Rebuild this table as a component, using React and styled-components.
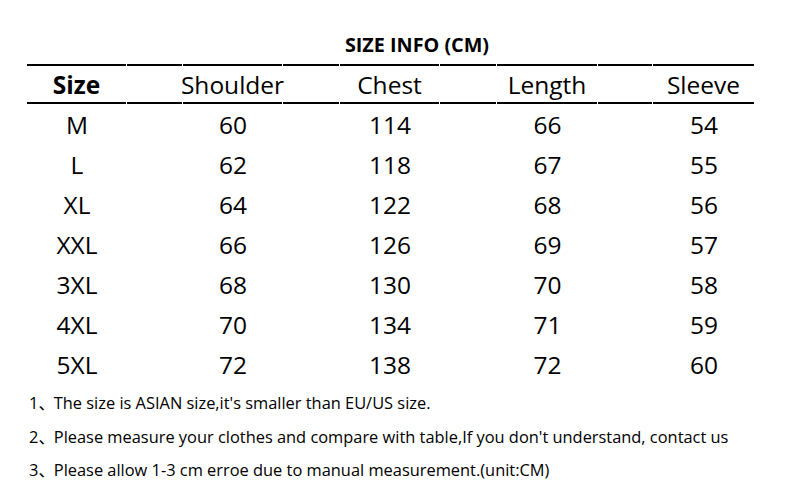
import React from "react";
import styled, { createGlobalStyle } from "styled-components";

const GlobalStyle = createGlobalStyle`
	html, body {
		margin: 0;
		padding: 0;
		background: #ffffff;
	}
	body {
		font-family: "Open Sans", "Noto Sans CJK SC", sans-serif;
		color: #000000;
	}
`;

const columns = ["Size", "Shoulder", "Chest", "Length", "Sleeve"];

const rows = [
	["M", 60, 114, 66, 54],
	["L", 62, 118, 67, 55],
	["XL", 64, 122, 68, 56],
	["XXL", 66, 126, 69, 57],
	["3XL", 68, 130, 70, 58],
	["4XL", 70, 134, 71, 59],
	["5XL", 72, 138, 72, 60],
];

const notes = [
	"The size is ASIAN size,it's smaller than EU/US size.",
	"Please measure your clothes and compare with table,If you don't understand, contact us",
	"Please allow 1-3 cm erroe due to manual measurement.(unit:CM)",
];

// data columns alternate with narrow spacer columns
const widths = [100, 56, 100, 57, 100, 57, 101, 55, 102];

function App() {
	return (
		<Page>
			<GlobalStyle />
			<Title>SIZE INFO (CM)</Title>
			<Table>
				{widths.map((w, i) => (
					<HeadCell key={"h" + i} $first={i === 0}>
						{i % 2 === 0 ? columns[i / 2] : ""}
					</HeadCell>
				))}
				{rows.map((row, r) =>
					widths.map((w, i) => (
						<Cell key={r + "-" + i}>{i % 2 === 0 ? row[i / 2] : ""}</Cell>
					))
				)}
			</Table>
			<Notes>
				{notes.map((n, i) => (
					<Note key={i}>
						<Num>{i + 1}、</Num>
						{n}
					</Note>
				))}
			</Notes>
		</Page>
	);
}

export default App;

const Page = styled.div`
	width: 794px;
	height: 497px;
	overflow: hidden;
	padding-top: 33px;
	box-sizing: border-box;
`;

const Title = styled.div`
	width: 794px;
	padding-left: 40px;
	box-sizing: border-box;
	text-align: center;
	font-weight: 700;
	font-size: 19.8px;
	line-height: 24px;
`;

const Table = styled.div`
	display: grid;
	grid-template-columns: ${widths.map((w) => w + "px").join(" ")};
	grid-auto-rows: 40px;
	margin: 7px 0 0 27px;
`;

const HeadCell = styled.div`
	display: flex;
	align-items: center;
	justify-content: center;
	border-top: 2px solid #000;
	border-bottom: 2px solid #000;
	margin-right: 1px;
	font-size: 24.5px;
	font-weight: ${(p) => (p.$first ? 700 : 400)};
	white-space: nowrap;
	padding-top: 1px;
`;

const Cell = styled.div`
	display: flex;
	align-items: center;
	justify-content: center;
	font-size: 24.5px;
	white-space: nowrap;
`;

const Notes = styled.div`
	display: flex;
	flex-direction: column;
	padding: 2px 0 0 29px;
`;

const Note = styled.div`
	font-size: 16.4px;
	line-height: 33.5px;
	white-space: nowrap;
`;

const Num = styled.span`
	margin-right: -1px;
`;
